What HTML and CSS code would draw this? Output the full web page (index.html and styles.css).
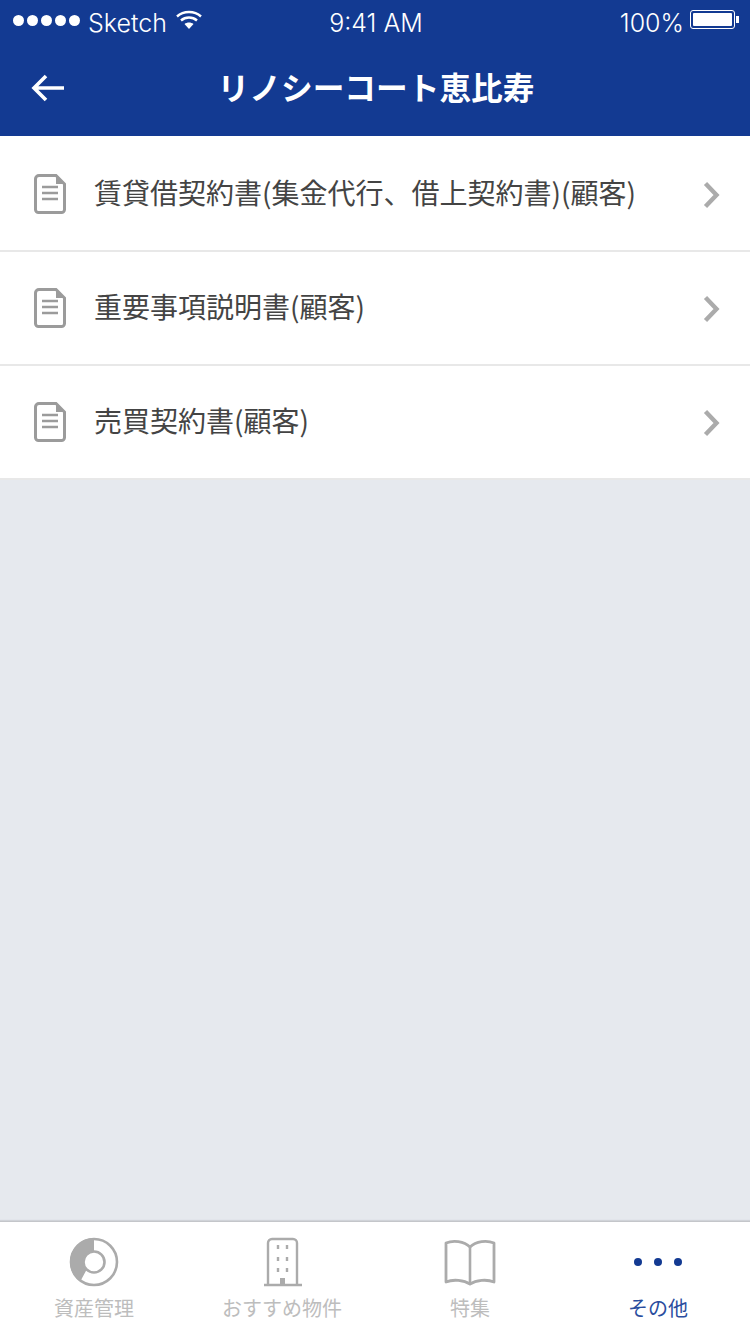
FILE: index.html
```html
<!DOCTYPE html>
<html lang="ja">
<head>
  <meta charset="UTF-8" />
  <title>リノシーコート恵比寿</title>
  <link rel="stylesheet" href="styles.css">
</head>
<body>
  <div class="app">
    <header class="header">
      <div class="status-bar">
        <div class="status-left">
          <span class="signal"><i></i><i></i><i></i><i></i><i></i></span>
          <span class="carrier">Sketch</span>
          <svg class="wifi" width="26" height="20" viewBox="0 0 26 20">
            <path d="M1 6.5C7.5 0.5 18.5 0.5 25 6.5" fill="none" stroke="#fff" stroke-width="2.4"/>
            <path d="M5 10.5C9.5 6.5 16.5 6.5 21 10.5" fill="none" stroke="#fff" stroke-width="2.4"/>
            <path d="M8.5 14C11 12 15 12 17.5 14L13 19Z" fill="#fff"/>
          </svg>
        </div>
        <div class="status-time">9:41 AM</div>
        <div class="status-right">
          <span class="percent">100%</span>
          <span class="battery"><span class="battery-fill"></span></span>
          <span class="battery-tip"></span>
        </div>
      </div>
      <div class="nav-bar">
        <svg class="back" width="34" height="30" viewBox="0 0 34 30">
          <path d="M33 15H3M15 3L3 15L15 27" fill="none" stroke="#fff" stroke-width="3.6"/>
        </svg>
        <h1>リノシーコート恵比寿</h1>
      </div>
    </header>

    <main class="content">
      <ul class="doc-list">
        <li class="doc-row">
          <svg class="doc-icon" width="34" height="42" viewBox="0 0 34 42">
            <path d="M6 2.5H23L31.5 11V36.5a3 3 0 0 1-3 3H5.5a3 3 0 0 1-3-3V6a3.5 3.5 0 0 1 3.5-3.5Z" fill="none" stroke="#9b9b9b" stroke-width="3"/>
            <path d="M23 2L32 11H23Z" fill="#9b9b9b"/>
            <path d="M9 14H25M9 20H25M9 26H25" stroke="#9b9b9b" stroke-width="2.6"/>
          </svg>
          <span class="doc-name">賃貸借契約書(集金代行、借上契約書)(顧客)</span>
          <svg class="chevron" width="18" height="28" viewBox="0 0 18 28">
            <path d="M2.5 2.5L13.5 14L2.5 25.5" fill="none" stroke="#ababab" stroke-width="4.4"/>
          </svg>
        </li>
        <li class="doc-row">
          <svg class="doc-icon" width="34" height="42" viewBox="0 0 34 42">
            <path d="M6 2.5H23L31.5 11V36.5a3 3 0 0 1-3 3H5.5a3 3 0 0 1-3-3V6a3.5 3.5 0 0 1 3.5-3.5Z" fill="none" stroke="#9b9b9b" stroke-width="3"/>
            <path d="M23 2L32 11H23Z" fill="#9b9b9b"/>
            <path d="M9 14H25M9 20H25M9 26H25" stroke="#9b9b9b" stroke-width="2.6"/>
          </svg>
          <span class="doc-name">重要事項説明書(顧客)</span>
          <svg class="chevron" width="18" height="28" viewBox="0 0 18 28">
            <path d="M2.5 2.5L13.5 14L2.5 25.5" fill="none" stroke="#ababab" stroke-width="4.4"/>
          </svg>
        </li>
        <li class="doc-row">
          <svg class="doc-icon" width="34" height="42" viewBox="0 0 34 42">
            <path d="M6 2.5H23L31.5 11V36.5a3 3 0 0 1-3 3H5.5a3 3 0 0 1-3-3V6a3.5 3.5 0 0 1 3.5-3.5Z" fill="none" stroke="#9b9b9b" stroke-width="3"/>
            <path d="M23 2L32 11H23Z" fill="#9b9b9b"/>
            <path d="M9 14H25M9 20H25M9 26H25" stroke="#9b9b9b" stroke-width="2.6"/>
          </svg>
          <span class="doc-name">売買契約書(顧客)</span>
          <svg class="chevron" width="18" height="28" viewBox="0 0 18 28">
            <path d="M2.5 2.5L13.5 14L2.5 25.5" fill="none" stroke="#ababab" stroke-width="4.4"/>
          </svg>
        </li>
      </ul>
    </main>

    <nav class="tab-bar">
      <div class="tab">
        <svg class="tab-icon" width="50" height="50" viewBox="0 0 50 50">
          <circle cx="25" cy="25" r="23" fill="none" stroke="#ababab" stroke-width="2.6"/>
          <path d="M25 1A24 24 0 0 0 11.2 44.6L18 32A10 10 0 0 1 25 15Z" fill="#ababab"/>
          <circle cx="25" cy="25" r="10.5" fill="none" stroke="#ababab" stroke-width="2.6"/>
        </svg>
        <span>資産管理</span>
      </div>
      <div class="tab">
        <svg class="tab-icon" width="40" height="50" viewBox="0 0 40 50">
          <path d="M6 48V6a4 4 0 0 1 4-4H31a4 4 0 0 1 4 4V48" fill="none" stroke="#ababab" stroke-width="2.4"/>
          <path d="M2 48H40" stroke="#ababab" stroke-width="2.6"/>
          <path d="M16 8V12M25 8V12M16 20V24M25 20V24M16 31V35M25 31V35" stroke="#ababab" stroke-width="2.4"/>
          <rect x="18" y="41" width="5" height="7" fill="#ababab"/>
        </svg>
        <span>おすすめ物件</span>
      </div>
      <div class="tab">
        <svg class="tab-icon" width="54" height="50" viewBox="0 0 54 50">
          <path d="M27 10C21 4 10 3 3 6V45C10 42 21 43 27 47C33 43 44 42 51 45V6C44 3 33 4 27 10Z" fill="none" stroke="#ababab" stroke-width="2.8" stroke-linejoin="round"/>
          <path d="M27 10V47" stroke="#ababab" stroke-width="2.6"/>
        </svg>
        <span>特集</span>
      </div>
      <div class="tab active">
        <svg class="tab-icon" width="50" height="50" viewBox="0 0 50 50">
          <circle cx="5" cy="25" r="4" fill="#133a92"/>
          <circle cx="25" cy="25" r="4" fill="#133a92"/>
          <circle cx="45" cy="25" r="4" fill="#133a92"/>
        </svg>
        <span>その他</span>
      </div>
    </nav>
  </div>
</body>
</html>
```

FILE: styles.css
```css
* {
  box-sizing: border-box;
}
html, body {
  margin: 0;
  padding: 0;
}
body {
  font-family: "Noto Sans CJK JP", "Liberation Sans", sans-serif;
  background-color: #e6e9ee;
}
.app {
  width: 750px;
  height: 1334px;
  display: flex;
  flex-direction: column;
  overflow: hidden;
}
.header {
  height: 136px;
  background: #133a92;
  color: white;
}
.status-bar {
  height: 40px;
  padding: 5px 11px 0 13px;
  display: grid;
  grid-template-columns: 1fr auto 1fr;
  align-items: center;
  font-family: Inter, "Liberation Sans", sans-serif;
  font-weight: 300;
  font-size: 25px;
}
.status-left {
  display: flex;
  align-items: center;
}
.signal {
  display: flex;
  gap: 3px;
  margin: -4px 8px 0 0;
}
.signal i {
  width: 11px;
  height: 11px;
  border-radius: 50%;
  background: white;
}
.wifi {
  margin-left: 9px;
  margin-top: -5px;
}
.status-right {
  display: flex;
  align-items: center;
  justify-content: flex-end;
}
.percent {
  margin-right: 6px;
}
.battery {
  width: 45px;
  height: 19px;
  border: 1px solid white;
  border-radius: 3px;
  padding: 2px;
  margin-top: -6px;
}
.battery-fill {
  display: block;
  height: 100%;
  background: white;
  border-radius: 1px;
}
.battery-tip {
  width: 3px;
  height: 7px;
  background: white;
  margin-left: 1px;
  margin-top: -6px;
}
.nav-bar {
  position: relative;
  height: 96px;
  display: flex;
  align-items: center;
  justify-content: center;
  padding: 0 0 2px 2px;
}
.nav-bar h1 {
  margin: 0;
  font-size: 31.7px;
  font-weight: 700;
  line-height: 1;
}
.back {
  position: absolute;
  left: 31px;
  top: 33px;
}
.content {
  flex: 1;
}
.doc-list {
  list-style: none;
  margin: 0;
  padding: 0;
  background: white;
}
.doc-row {
  height: 114px;
  padding: 0 29px 0 33px;
  display: flex;
  align-items: center;
  border-bottom: 2px solid #e8e8e8;
  background: white;
}
.doc-row:first-child {
  height: 116px;
  padding-top: 2px;
}
.doc-icon {
  flex-shrink: 0;
  margin-right: 27px;
}
.doc-name {
  flex: 1;
  font-size: 28px;
  line-height: 40px;
  color: #444;
  white-space: nowrap;
  margin-top: -4px;
}
.chevron {
  flex-shrink: 0;
  margin-top: 1px;
}
.tab-bar {
  height: 113px;
  display: grid;
  grid-template-columns: repeat(4, 188px);
  background: white;
  border-top: 1px solid #c4c6ca;
  box-shadow: 0 -1px 1px #d0d3d8;
}
.tab {
  display: flex;
  flex-direction: column;
  align-items: center;
  padding-top: 15px;
  font-size: 20px;
  line-height: 26px;
  color: #bdbdbd;
}
.tab-icon {
  display: block;
  margin-bottom: 8px;
}
.tab.active {
  color: #2a4d9e;
}
```
